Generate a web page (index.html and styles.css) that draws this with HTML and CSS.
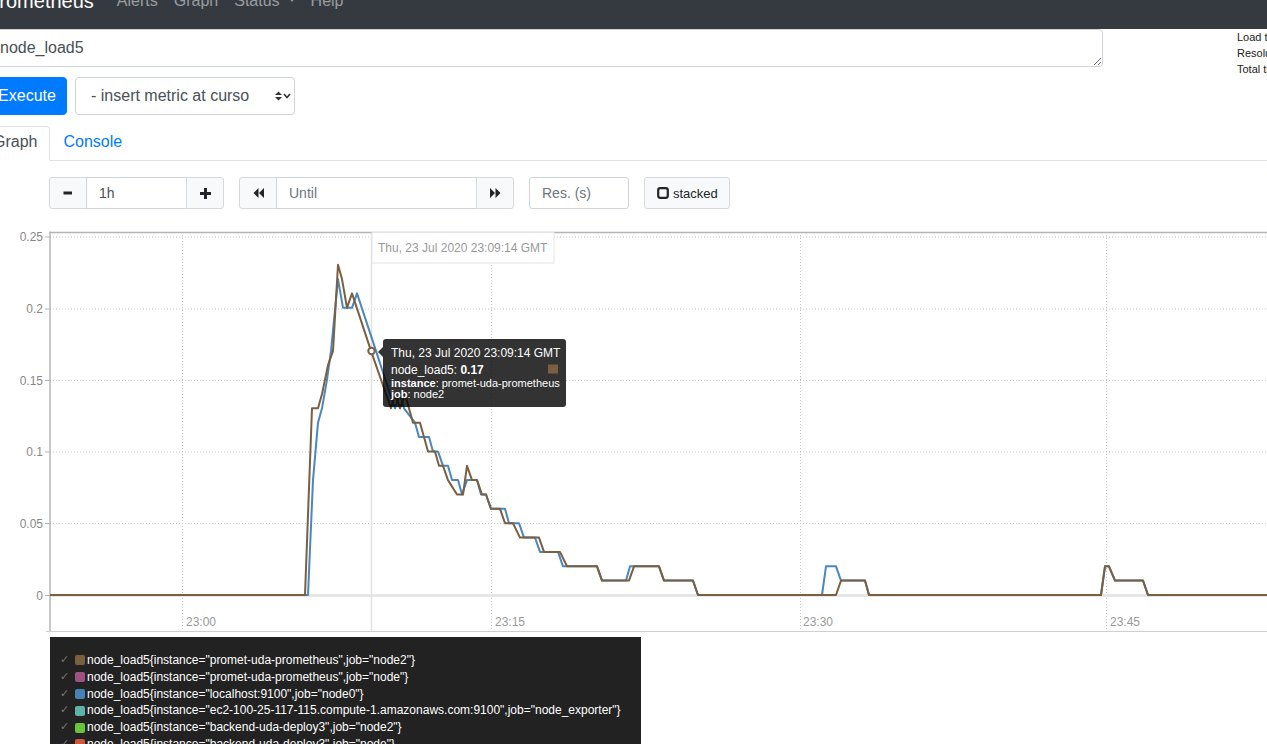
FILE: index.html
```html
<!DOCTYPE html>
<html>
<head>
<meta charset="utf-8">
<title>Prometheus Time Series Collection and Processing Server</title>
<link rel="stylesheet" href="styles.css">
</head>
<body>
<nav class="navbar">
  <div class="nav-inner">
    <span class="brand">Prometheus</span>
    <span class="nav-link">Alerts</span>
    <span class="nav-link">Graph</span>
    <span class="nav-link">Status<span class="caret"></span></span>
    <span class="nav-link">Help</span>
  </div>
</nav>
<main class="page">
  <div class="expr-row">
    <textarea class="expr" rows="1">node_load5</textarea>
    <div class="stats">
      <div>Load time: 38ms</div>
      <div>Resolution: 14s</div>
      <div>Total time series: 6</div>
    </div>
  </div>
  <div class="exec-row">
    <button class="btn-exec">Execute</button>
    <div class="select">
      <span class="select-text">- insert metric at cursor -</span>
      <svg class="select-arrow" width="16" height="10" viewBox="0 0 16 10"><path d="M0 4L3.5 0.5L7 4Z M0 6L3.5 9.5L7 6Z" fill="#333"/><path d="M9 3L12 6.5L15 3" fill="none" stroke="#333" stroke-width="1.6"/></svg>
    </div>
  </div>
  <div class="tabs">
    <span class="tab active">Graph</span>
    <span class="tab link">Console</span>
  </div>
  <div class="controls">
    <div class="ig">
      <span class="btn-ctl"><svg width="10" height="10" viewBox="0 0 10 10"><rect x="0.5" y="3.5" width="8.5" height="3" fill="#212529"/></svg></span>
      <span class="inp inp-range">1h</span>
      <span class="btn-ctl"><svg width="11" height="11" viewBox="0 0 11 11"><path d="M4 0h3v4h4v3H7v4H4V7H0V4h4z" fill="#212529"/></svg></span>
    </div>
    <div class="ig">
      <span class="btn-ctl"><svg width="11" height="10" viewBox="0 0 11 10"><path d="M5.5 0V10L0.5 5Z M11 0V10L6 5Z" fill="#212529"/></svg></span>
      <span class="inp inp-until placeholder">Until</span>
      <span class="btn-ctl"><svg width="11" height="10" viewBox="0 0 11 10"><path d="M0 0V10L5 5Z M5.5 0V10L10.5 5Z" fill="#212529"/></svg></span>
    </div>
    <span class="inp inp-res placeholder">Res. (s)</span>
    <span class="btn-stacked"><svg width="12" height="12" viewBox="0 0 12 12"><rect x="1.2" y="1.2" width="9.6" height="9.6" rx="2" fill="none" stroke="#212529" stroke-width="2.2"/></svg>stacked</span>
  </div>

  <svg class="chart" width="1267" height="412" viewBox="0 225 1267 412">
    <path d="M50 237H1267M50 309H1267M50 380.5H1267M50 452H1267M50 523.5H1267" stroke="#c4c4c4" stroke-width="1" stroke-dasharray="1 2" fill="none"/>
    <path d="M182.5 232V631M491.5 232V631M800.5 232V631M1106.5 232V631" stroke="#c4c4c4" stroke-width="1" stroke-dasharray="1 2" fill="none"/>
    <path d="M50 595.5H1267" stroke="#e6e6e6" stroke-width="3"/>
    <path d="M371.5 232V631" stroke="#e2e2e2" stroke-width="1.5"/>
    <path d="M50 232.5H1267" stroke="#b4b4b4" stroke-width="1.5"/>
    <path d="M50 231.5V632" stroke="#b4b4b4" stroke-width="1.5"/>
    <path d="M46 631.5H1267" stroke="#cfcfcf" stroke-width="1"/>
    <path d="M45 237H50M45 309H50M45 380.5H50M45 452H50M45 523.5H50M45 595.5H50" stroke="#b4b4b4" stroke-width="1"/>
    <g class="ylab">
      <text x="43" y="241">0.25</text>
      <text x="43" y="313">0.2</text>
      <text x="43" y="384.5">0.15</text>
      <text x="43" y="456">0.1</text>
      <text x="43" y="527.5">0.05</text>
      <text x="43" y="599.5">0</text>
    </g>
    <g class="xlab">
      <text x="186" y="626">23:00</text>
      <text x="495" y="626">23:15</text>
      <text x="803" y="626">23:30</text>
      <text x="1110" y="626">23:45</text>
    </g>
    <polyline fill="none" stroke="#4a87c0" stroke-width="2" stroke-linejoin="round" points="50,595 308,595 313,480.1 318,422.7 322,408.3 327,379.6 331,350.9 338,279.1 343,307.8 352,307.8 357,293.4 376,350.9 390,394 395,408.3 400,394 404,408.3 415,422.7 419,437 429,437 433,451.4 438,451.4 443,465.8 448,465.8 452,480.1 458,480.1 462,494.5 467,480.1 477,480.1 481,494.5 486,494.5 491,508.8 505,508.8 509,523.2 519,523.2 524,537.6 535,537.6 540,551.9 558,551.9 563,566.3 597,566.3 602,580.6 626,580.6 630,566.3 659,566.3 664,580.6 693,580.6 698,595 822,595 826,566.3 836,566.3 841,580.6 865,580.6 869,595 1101,595 1105,566.3 1109,566.3 1115,580.6 1143,580.6 1148,595 1270,595"/>
    <polyline fill="none" stroke="#7b5f41" stroke-width="2" stroke-linejoin="round" points="50,595 305,595 312,408.3 318,408.3 322,394 328,365.2 333,350.9 338,264.7 342,279.1 347,307.8 352,293.4 371,350.9 386,394 391,408.3 395,394 400,408.3 405,394 413,422.7 420,422.7 428,451.4 435,451.4 439,465.8 443,465.8 448,480.1 457,494.5 463,494.5 467,465.8 472,480.1 477,480.1 482,494.5 486,494.5 491,508.8 500,508.8 505,523.2 513,523.2 520,537.6 539,537.6 544,551.9 560,551.9 567,566.3 597,566.3 602,580.6 629,580.6 634,566.3 659,566.3 664,580.6 693,580.6 698,595 836,595 841,580.6 865,580.6 869,595 1101,595 1105,566.3 1109,566.3 1115,580.6 1143,580.6 1148,595 1270,595"/>
    <rect x="372" y="232.5" width="182" height="30.5" fill="#fff" stroke="#e4e4e4" stroke-width="1"/>
    <text class="hover-time" x="378" y="252">Thu, 23 Jul 2020 23:09:14 GMT</text>
    <circle cx="371.5" cy="351" r="3.2" fill="#fff" stroke="#7b5f41" stroke-width="2"/>
    <path d="M383 347L378 352L383 357Z" fill="rgba(0,0,0,0.8)"/>
    <rect x="383" y="339" width="183" height="68" rx="3" fill="rgba(0,0,0,0.8)"/>
    <g class="tip">
      <text x="391" y="357">Thu, 23 Jul 2020 23:09:14 GMT</text>
      <text x="391" y="374">node_load5: <tspan font-weight="bold">0.17</tspan></text>
      <text class="small" x="391" y="387"><tspan font-weight="bold">instance</tspan>: promet-uda-prometheus</text>
      <text class="small" x="391" y="398"><tspan font-weight="bold">job</tspan>: node2</text>
    </g>
    <rect x="548" y="364.5" width="10" height="9" fill="#7b5f41"/>
  </svg>

  <div class="legend">
    <div class="li"><span class="chk">✓</span><span class="sw" style="background:#7b5f41"></span>node_load5{instance="promet-uda-prometheus",job="node2"}</div>
    <div class="li"><span class="chk">✓</span><span class="sw" style="background:#a0527f"></span>node_load5{instance="promet-uda-prometheus",job="node"}</div>
    <div class="li"><span class="chk">✓</span><span class="sw" style="background:#4682b4"></span>node_load5{instance="localhost:9100",job="node0"}</div>
    <div class="li"><span class="chk">✓</span><span class="sw" style="background:#5fb3a6"></span>node_load5{instance="ec2-100-25-117-115.compute-1.amazonaws.com:9100",job="node_exporter"}</div>
    <div class="li"><span class="chk">✓</span><span class="sw" style="background:#6cc13c"></span>node_load5{instance="backend-uda-deploy3",job="node2"}</div>
    <div class="li"><span class="chk">✓</span><span class="sw" style="background:#d0553a"></span>node_load5{instance="backend-uda-deploy3",job="node"}</div>
  </div>
</main>
</body>
</html>
```

FILE: styles.css
```css
html, body {
  margin: 0;
  padding: 0;
  width: 1267px;
  height: 744px;
  overflow: hidden;
  background: #fff;
}
body {
  font-family: "Liberation Sans", Arial, sans-serif;
  color: #212529;
  font-size: 16px;
}

/* navbar */
.navbar {
  height: 29px;
  background: #343a40;
  overflow: hidden;
}
.nav-inner {
  display: flex;
  align-items: center;
  height: 56px;
  margin-top: -27px;
  margin-left: -14px;
  white-space: nowrap;
}
.brand {
  font-size: 20px;
  line-height: 30px;
  color: #fff;
  margin-right: 15px;
}
.nav-link {
  font-size: 16px;
  line-height: 24px;
  padding: 0 8px;
  color: rgba(255, 255, 255, 0.5);
}
.caret {
  display: inline-block;
  vertical-align: middle;
  margin-left: 9px;
  margin-top: -3px;
  border-top: 4px solid rgba(255, 255, 255, 0.5);
  border-left: 3.5px solid transparent;
  border-right: 3.5px solid transparent;
}

.page {
  margin-left: -13px;
}

/* expression row */
.expr-row {
  display: flex;
  height: 38px;
  white-space: nowrap;
}
.expr {
  flex: none;
  box-sizing: border-box;
  width: 1116px;
  height: 38px;
  margin: 0;
  padding: 6px 12px;
  border: 1px solid #ced4da;
  border-radius: 4px;
  font-family: "Liberation Sans", Arial, sans-serif;
  font-size: 16px;
  line-height: 24px;
  color: #495057;
  background: #fff;
}
.stats {
  flex: none;
  margin-left: 134px;
  font-size: 11px;
  line-height: 16px;
  color: #222;
}

/* execute row */
.exec-row {
  display: flex;
  gap: 8px;
  margin-top: 10px;
}
.btn-exec {
  width: 80px;
  height: 38px;
  padding: 0;
  background: #007bff;
  border: 1px solid #007bff;
  border-radius: 4px;
  color: #fff;
  font-family: "Liberation Sans", Arial, sans-serif;
  font-size: 16px;
}
.select {
  box-sizing: border-box;
  width: 220px;
  height: 38px;
  border: 1px solid #ced4da;
  border-radius: 4px;
  display: flex;
  align-items: center;
  padding: 0 3px 0 15px;
  color: #495057;
}
.select-text {
  width: 159px;
  overflow: hidden;
  white-space: nowrap;
}
.select-arrow {
  margin-left: auto;
}

/* tabs */
.tabs {
  display: flex;
  margin-top: 11px;
  border-bottom: 1px solid #dee2e6;
}
.tab {
  padding: 3px 12px 6px;
  line-height: 24px;
  border: 1px solid transparent;
  border-radius: 4px 4px 0 0;
  margin-bottom: -1px;
}
.tab.active {
  margin-left: -7px;
  color: #495057;
  border-color: #dee2e6 #dee2e6 #fff;
  background: #fff;
}
.tab.link {
  color: #007bff;
}

/* controls */
.controls {
  display: flex;
  margin-top: 16px;
  margin-left: 62px;
  height: 32px;
  font-size: 14px;
}
.ig {
  display: flex;
  margin-right: 15px;
}
.btn-ctl {
  box-sizing: border-box;
  width: 38px;
  height: 32px;
  background: #f8f9fa;
  border: 1px solid #d6d9dc;
  display: flex;
  align-items: center;
  justify-content: center;
}
.btn-ctl + .inp, .inp + .btn-ctl {
  margin-left: -1px;
}
.ig .btn-ctl:first-child {
  border-radius: 3px 0 0 3px;
}
.ig .btn-ctl:last-child {
  border-radius: 0 3px 3px 0;
}
.inp {
  box-sizing: border-box;
  height: 32px;
  border: 1px solid #ced4da;
  padding: 0 12px;
  line-height: 30px;
  color: #495057;
  background: #fff;
}
.inp-range { width: 101px; }
.inp-until { width: 201px; }
.inp-res {
  width: 100px;
  border-radius: 3px;
  margin-right: 15px;
}
.placeholder { color: #6c757d; }
.btn-stacked {
  box-sizing: border-box;
  width: 86px;
  height: 32px;
  background: #f8f9fa;
  border: 1px solid #d6d9dc;
  border-radius: 3px;
  display: flex;
  align-items: center;
  padding-left: 12px;
  gap: 4px;
  font-size: 13px;
  color: #212529;
}

/* chart */
.chart {
  display: block;
  margin-left: 13px;
  margin-top: 16px;
  font-family: "Liberation Sans", Arial, sans-serif;
}
.ylab text {
  font-size: 12px;
  fill: #888;
  text-anchor: end;
}
.xlab text {
  font-size: 12px;
  fill: #999;
}
.hover-time {
  font-size: 12px;
  fill: #999;
}
.tip text {
  font-size: 12px;
  fill: #fff;
}
.tip text.small {
  font-size: 11px;
}

/* legend */
.legend {
  margin-left: 63px;
  width: 591px;
  height: 140px;
  box-sizing: border-box;
  background: #222;
  padding: 15px 0 0 10px;
  font-size: 12px;
  line-height: 16.8px;
  color: #fff;
  white-space: nowrap;
}
.li {
  display: flex;
  align-items: center;
}
.chk {
  width: 15px;
  font-size: 11px;
  color: #777;
  font-family: "DejaVu Sans", sans-serif;
}
.sw {
  width: 10px;
  height: 10px;
  border-radius: 2px;
  margin-right: 2px;
}
```
